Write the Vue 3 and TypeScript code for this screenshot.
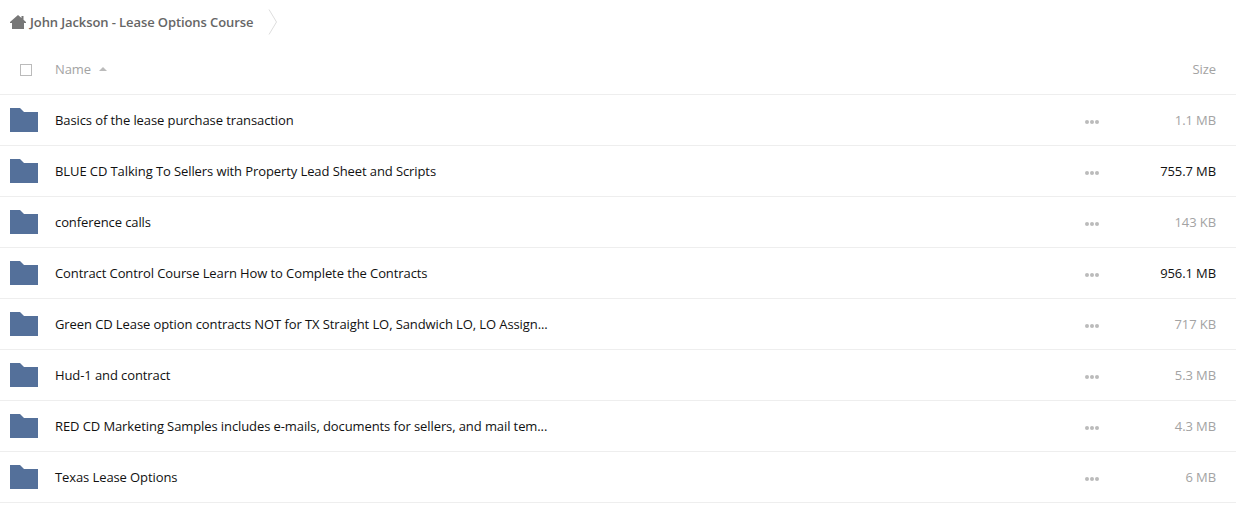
<template>
  <div class="page">
    <div class="crumbs">
      <svg class="home" width="16" height="14" viewBox="0 0 16 14">
        <path d="M8 0 L11.5 3 V1 H13.5 V4.8 L16 7 V8 H14 V14 H2 V8 H0 V7 Z" fill="#777" />
      </svg>
      <span class="crumb-title">John Jackson - Lease Options Course</span>
      <svg class="crumb-sep" width="10" height="26" viewBox="0 0 10 26">
        <path d="M1 0.5 L8.5 13 L1 25.5" fill="none" stroke="#ddd" stroke-width="1" />
      </svg>
    </div>

    <div class="head">
      <div class="check-cell"><span class="check"></span></div>
      <div class="name-head">
        Name
        <span class="sort"></span>
      </div>
      <div class="size-head">Size</div>
    </div>

    <div v-for="row in rows" :key="row.name" class="row">
      <svg class="folder" width="28" height="24" viewBox="0 0 28 24">
        <path d="M0 0 H10 L14 4 H28 V24 H0 Z" fill="#54709a" />
      </svg>
      <div class="name">{{ row.name }}</div>
      <div class="dots"><i></i><i></i><i></i></div>
      <div class="size" :class="{ big: row.big }">{{ row.size }}</div>
    </div>
  </div>
</template>

<script setup lang="ts">
interface Row {
  name: string;
  size: string;
  big?: boolean;
}

const rows: Row[] = [
  { name: "Basics of the lease purchase transaction", size: "1.1 MB" },
  { name: "BLUE CD Talking To Sellers with Property Lead Sheet and Scripts", size: "755.7 MB", big: true },
  { name: "conference calls", size: "143 KB" },
  { name: "Contract Control Course Learn How to Complete the Contracts", size: "956.1 MB", big: true },
  { name: "Green CD Lease option contracts NOT for TX Straight LO, Sandwich LO, LO Assign...", size: "717 KB" },
  { name: "Hud-1 and contract", size: "5.3 MB" },
  { name: "RED CD Marketing Samples includes e-mails, documents for sellers, and mail tem...", size: "4.3 MB" },
  { name: "Texas Lease Options", size: "6 MB" },
];
</script>

<style>
html,
body {
  background: #fff;
  overflow: hidden;
}
</style>

<style scoped>
.page {
  width: 1236px;
  height: 506px;
  font-family: "Open Sans", sans-serif;
  font-size: 13px;
  letter-spacing: -0.095px;
  color: #111;
  overflow: hidden;
}

.crumbs {
  height: 44px;
  display: flex;
  align-items: center;
  padding-left: 10px;
}

.home {
  margin-right: 4px;
}

.crumb-title {
  font-weight: 600;
  color: #666;
}

.crumb-sep {
  margin-left: 15px;
}

.head {
  height: 50px;
  display: flex;
  align-items: center;
  border-bottom: 1px solid #eee;
  color: #a3a3a3;
  padding-right: 20px;
}

.check-cell {
  width: 55px;
  padding-left: 20px;
  box-sizing: border-box;
}

.check {
  display: block;
  width: 10px;
  height: 10px;
  margin-top: 1px;
  border: 1px solid #bbb;
}

.name-head {
  flex: 1;
  display: flex;
  align-items: center;
}

.sort {
  margin-left: 8px;
  width: 0;
  height: 0;
  border-left: 4px solid transparent;
  border-right: 4px solid transparent;
  border-bottom: 4px solid #bbb;
}

.row {
  height: 50px;
  display: flex;
  align-items: center;
  border-bottom: 1px solid #eee;
  padding: 0 20px 0 10px;
}

.folder {
  margin-right: 17px;
  flex-shrink: 0;
}

.name {
  flex: 1;
}

.dots {
  display: flex;
  gap: 1px;
  margin-top: 3px;
}

.dots i {
  width: 4px;
  height: 4px;
  border-radius: 50%;
  background: #bbb;
}

.size {
  width: 117px;
  text-align: right;
  color: #a3a3a3;
}

.size.big {
  color: #111;
}
</style>
